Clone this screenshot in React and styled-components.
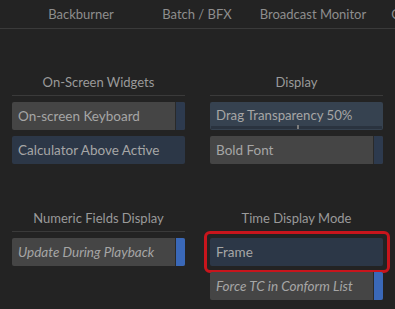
import styled, { createGlobalStyle } from "styled-components";

const GlobalStyle = createGlobalStyle`
  body {
    margin: 0;
    background: #232323;
    font-family: Lato, "Noto Sans", sans-serif;
    -webkit-font-smoothing: antialiased;
  }
`;

const tabs = ["Backburner", "Batch / BFX", "Broadcast Monitor", "Colour Mgmt"];

const App = () => {
    return (
        <Page>
            <GlobalStyle />
            <TabBar>
                {tabs.map((t) => (
                    <Tab key={t}>{t}</Tab>
                ))}
            </TabBar>
            <Grid>
                <Section>
                    <Heading>On-Screen Widgets</Heading>
                    <Toggle strip="dim">On-screen Keyboard</Toggle>
                    <Toggle active>Calculator Above Active</Toggle>
                </Section>
                <Section>
                    <Heading>Display</Heading>
                    <Slider>
                        Drag Transparency 50%
                        <Track>
                            <Handle style={{ left: "50%" }} />
                        </Track>
                    </Slider>
                    <Toggle strip="dim">Bold Font</Toggle>
                </Section>
                <Section>
                    <Heading>Numeric Fields Display</Heading>
                    <Toggle strip="on" italic>Update During Playback</Toggle>
                </Section>
                <Section>
                    <Heading>Time Display Mode</Heading>
                    <Highlighted>
                        <Toggle active>Frame</Toggle>
                        <Ring />
                    </Highlighted>
                    <Toggle strip="on" italic>Force TC in Conform List</Toggle>
                </Section>
            </Grid>
        </Page>
    );
};

const Page = styled.div`
width: 395px;
height: 309px;
overflow: hidden;
background: #232323;
`;

const TabBar = styled.div`
height: 28px;
display: flex;
padding-left: 23px;
border-bottom: 1px solid #3a3a3a;
white-space: nowrap;
`;

const Tab = styled.div`
flex: 0 0 116px;
overflow: hidden;
text-align: center;
line-height: 29px;
font-size: 13px;
color: #8e8e8e;
`;

const Grid = styled.div`
display: grid;
grid-template-columns: 173px 173px;
column-gap: 25px;
row-gap: 43px;
padding: 42px 0 0 12px;
align-items: start;
`;

const Section = styled.div`
display: flex;
flex-direction: column;
gap: 6px;
`;

const Heading = styled.div`
height: 24px;
line-height: 23px;
border-bottom: 1px solid #3a3a3a;
text-align: center;
font-size: 13px;
color: #9a9a9a;
`;

const stripColours = {
    dim: "#2d3a4e",
    on: "#3a68b8",
};

const Toggle = styled.div`
position: relative;
height: 28px;
line-height: 28px;
padding-left: 6px;
border-radius: 2px;
font-size: 13.5px;
font-style: ${(p) => (p.italic ? "italic" : "normal")};
color: #a6a6a6;
white-space: nowrap;
background: ${(p) => (p.active ? "#2c3747" : "#454545")};
${(p) =>
        p.strip &&
        `
    &::after {
        content: "";
        position: absolute;
        top: 0;
        right: 0;
        bottom: 0;
        width: 9px;
        border-left: 1px solid #2a2a2a;
        border-radius: 0 2px 2px 0;
        background: ${stripColours[p.strip]};
    }
`}
`;

const Slider = styled.div`
position: relative;
height: 28px;
line-height: 26px;
padding-left: 6px;
border-radius: 2px;
font-size: 13.2px;
color: #a6a6a6;
background: #364250;
`;

const Track = styled.div`
position: absolute;
left: 1px;
right: 1px;
bottom: 1px;
height: 3px;
background: #2a333f;
`;

const Handle = styled.div`
position: absolute;
top: -1px;
width: 2px;
height: 4px;
background: #7c7c7c;
`;

const Highlighted = styled.div`
position: relative;
`;

const Ring = styled.div`
position: absolute;
top: -7px;
left: -6px;
right: -7px;
bottom: -7px;
border: 3.5px solid #c8151c;
border-radius: 6px;
pointer-events: none;
`;

export default App;
